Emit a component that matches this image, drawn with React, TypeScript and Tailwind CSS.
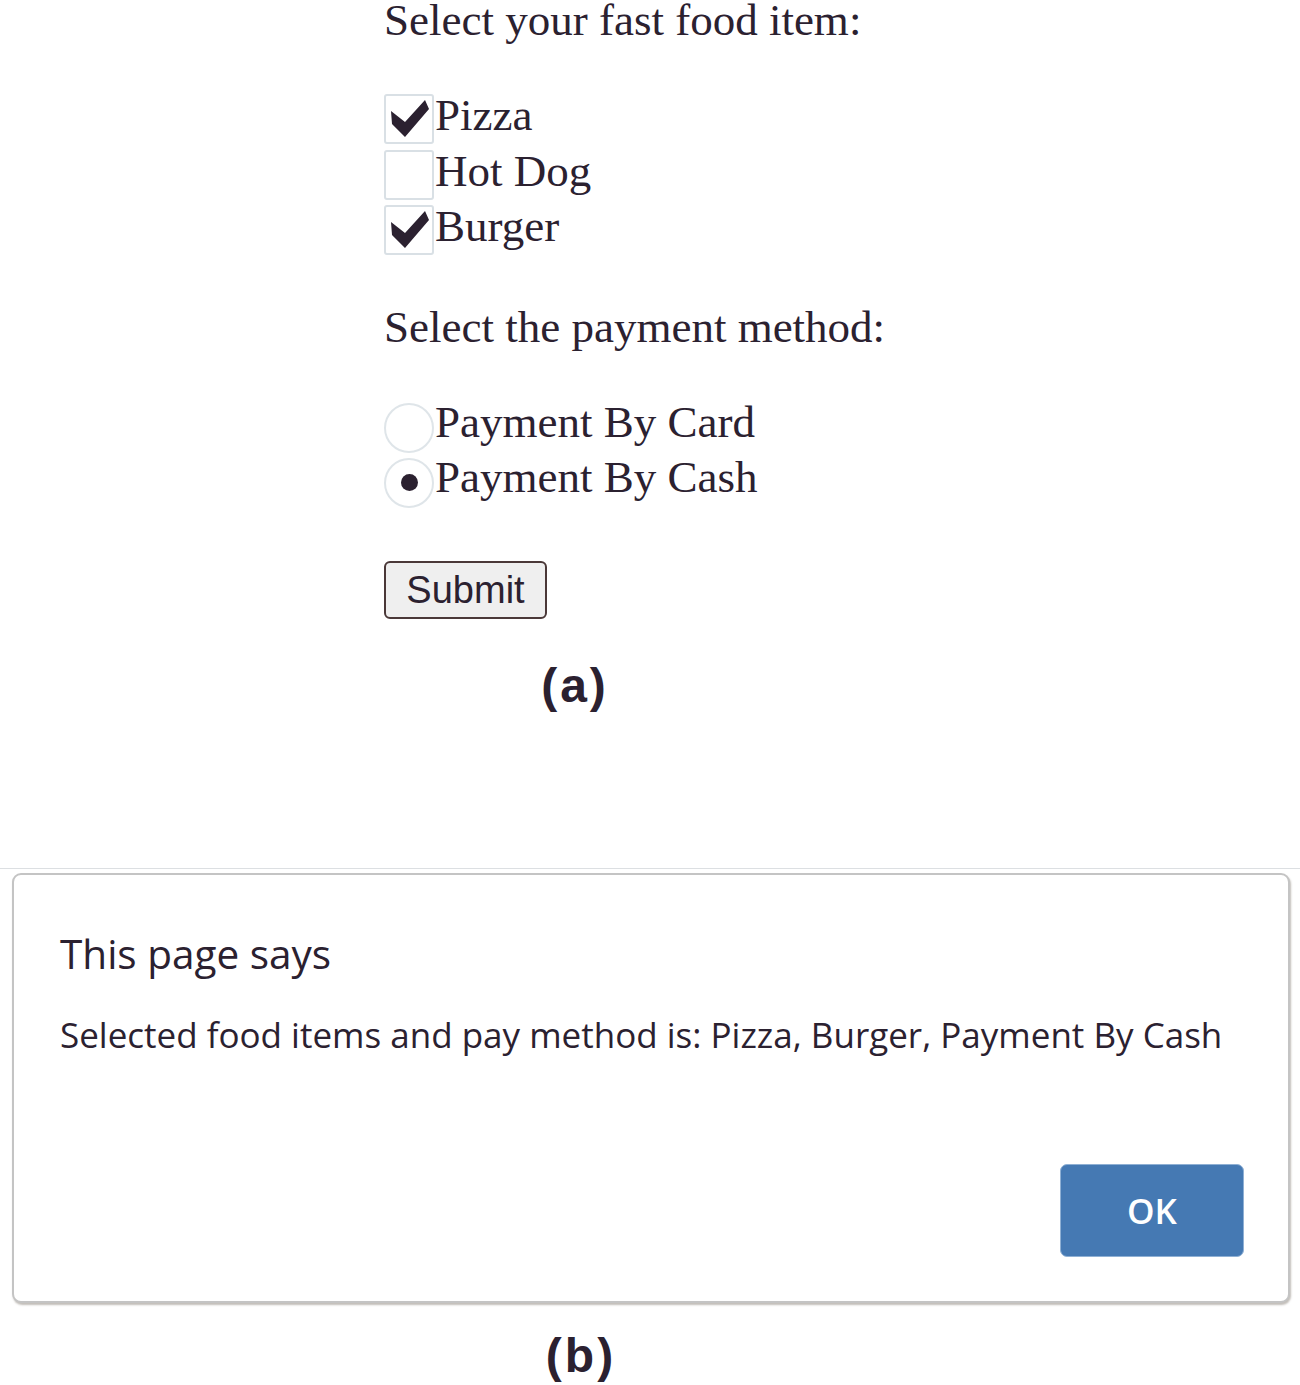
import React from 'react'

const INK = 'text-[#2b2130]'

function CheckBox({ checked }: { checked: boolean }) {
  return (
    <div className="w-[50px] h-[50px] shrink-0 border-2 border-[#d9e0e5] rounded-[3px] bg-white">
      {checked && (
        <svg width="46" height="46" viewBox="2 2 46 46">
          <polygon points="7,17 21,28 41,6 45,15 21,43 8,30" fill="#2b2130" />
        </svg>
      )}
    </div>
  )
}

function Radio({ checked }: { checked: boolean }) {
  return (
    <div className="w-[50px] h-[50px] shrink-0 border-2 border-[#dfe5e9] rounded-full bg-white flex items-center justify-center">
      {checked && <div className="w-[17px] h-[17px] rounded-full bg-[#2b2130]" />}
    </div>
  )
}

const FOODS = [
  { label: 'Pizza', checked: true },
  { label: 'Hot Dog', checked: false },
  { label: 'Burger', checked: true },
]

const PAYMENTS = [
  { label: 'Payment By Card', checked: false },
  { label: 'Payment By Cash', checked: true },
]

export default function App() {
  return (
    <div className={`w-[1300px] h-[1385px] bg-white overflow-hidden ${INK}`}>
      {/* (a) form */}
      <div className="pl-[384px] font-['Liberation_Serif',serif]">
        <div className="h-[40px] text-[45px] leading-[40px] whitespace-nowrap">Select your fast food item:</div>

        <div className="mt-[54px] flex flex-col">
          {FOODS.map((f) => (
            <div key={f.label} className="h-[55.5px] flex items-start">
              <CheckBox checked={f.checked} />
              <span className="ml-[1px] text-[45px] leading-[42px] whitespace-nowrap">{f.label}</span>
            </div>
          ))}
        </div>

        <div className="mt-[46px] h-[40px] text-[45px] leading-[40px] whitespace-nowrap">Select the payment method:</div>

        <div className="mt-[56px] flex flex-col">
          {PAYMENTS.map((p) => (
            <div key={p.label} className="h-[55px] flex items-start">
              <Radio checked={p.checked} />
              <span className="ml-[1px] text-[45px] leading-[39px] whitespace-nowrap">{p.label}</span>
            </div>
          ))}
        </div>

        <button className="mt-[48px] w-[163px] h-[58px] rounded-[6px] border-2 border-[#4a3838] bg-[#efefef] font-['Liberation_Sans',sans-serif] text-[38px] leading-[54px] text-[#2b2130]">
          Submit
        </button>
      </div>

      <div className="mt-[42px] w-[1150px] h-[50px] text-center font-['Liberation_Sans',sans-serif] font-bold text-[48px] leading-[50px] tracking-[3px]">
        (a)
      </div>

      {/* (b) alert dialog */}
      <div className="mt-[157px] border-t border-[#dcdfe2]">
        <div className="mt-[4px] ml-[12px] w-[1278px] h-[430px] rounded-[9px] border-2 border-[#c4c4c4] bg-white shadow-[1px_2px_2px_rgba(120,110,100,0.45)] flex flex-col font-['Open_Sans',sans-serif] pl-[46px] pr-[44px]">
          <div className="mt-[52px] text-[40.5px] leading-[54px] whitespace-nowrap">This page says</div>
          <div className="mt-[31px] text-[35px] leading-[46px] whitespace-nowrap">
            Selected food items and pay method is: Pizza, Burger, Payment By Cash
          </div>
          <div className="mt-auto mb-[44px] flex justify-end">
            <button className="w-[184px] h-[93px] rounded-[7px] bg-[#4579b3] border border-[#8fb0d4] text-white text-[35px] font-semibold leading-none">
              OK
            </button>
          </div>
        </div>
      </div>

      <div className="mt-[28px] w-[1162px] h-[50px] text-center font-['Liberation_Sans',sans-serif] font-bold text-[48px] leading-[50px] tracking-[3px]">
        (b)
      </div>
    </div>
  )
}
